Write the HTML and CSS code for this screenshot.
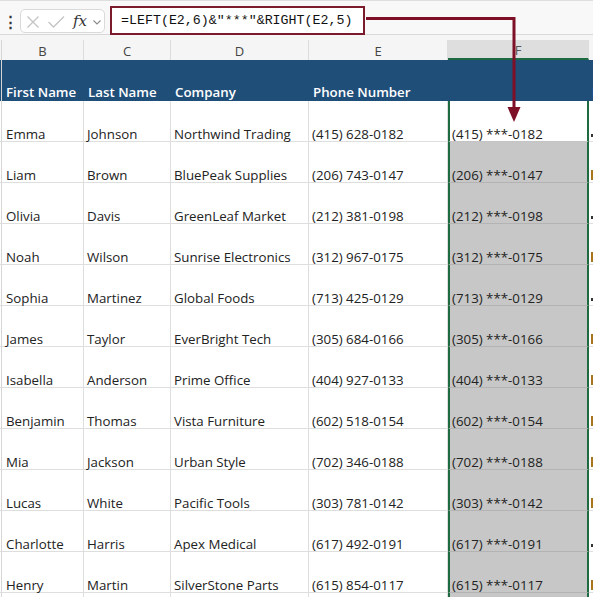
FILE: index.html
```html
<!DOCTYPE html>
<html>
<head>
<meta charset="utf-8">
<link rel="stylesheet" href="styles.css">
</head>
<body>
<div class="app">
  <div class="fbar">
    <span class="dots">&#8942;</span>
    <div class="ctrl">
      <svg width="85" height="24" viewBox="0 0 85 24">
        <path d="M7.5 7.5 L18.5 18.5 M18.5 7.5 L7.5 18.5" stroke="#c4c4c4" stroke-width="1.3" fill="none"/>
        <path d="M28.5 13 L33.5 18 L44 7.5" stroke="#c4c4c4" stroke-width="1.3" fill="none"/>
        <path d="M73.5 11.5 L77 15 L80.5 11.5" stroke="#8a8a8a" stroke-width="1.1" fill="none"/>
      </svg>
      <span class="fx">fx</span>
    </div>
    <div class="formula">=LEFT(E2,6)&amp;"***"&amp;RIGHT(E2,5)</div>
  </div>
  <div class="gap"></div>
  <div class="row colhdr">
    <div class="c"></div>
    <div class="c">B</div>
    <div class="c">C</div>
    <div class="c">D</div>
    <div class="c">E</div>
    <div class="c f">F</div>
    <div class="c"></div>
  </div>
  <div class="row hdr">
    <div class="c"></div>
    <div class="c">First Name</div>
    <div class="c">Last Name</div>
    <div class="c">Company</div>
    <div class="c">Phone Number</div>
    <div class="c"></div>
    <div class="c g">Email</div>
  </div>
  <div class="row data">
    <div class="c"></div><div class="c">Emma</div><div class="c">Johnson</div><div class="c">Northwind Trading</div><div class="c">(415) 628-0182</div><div class="c f active">(415) ***-0182</div><div class="c g"><i class="mk d"></i></div>
  </div>
  <div class="row data">
    <div class="c"></div><div class="c">Liam</div><div class="c">Brown</div><div class="c">BluePeak Supplies</div><div class="c">(206) 743-0147</div><div class="c f">(206) ***-0147</div><div class="c g"><i class="mk b"></i></div>
  </div>
  <div class="row data">
    <div class="c"></div><div class="c">Olivia</div><div class="c">Davis</div><div class="c">GreenLeaf Market</div><div class="c">(212) 381-0198</div><div class="c f">(212) ***-0198</div><div class="c g"><i class="mk d"></i></div>
  </div>
  <div class="row data">
    <div class="c"></div><div class="c">Noah</div><div class="c">Wilson</div><div class="c">Sunrise Electronics</div><div class="c">(312) 967-0175</div><div class="c f">(312) ***-0175</div><div class="c g"><i class="mk b"></i></div>
  </div>
  <div class="row data">
    <div class="c"></div><div class="c">Sophia</div><div class="c">Martinez</div><div class="c">Global Foods</div><div class="c">(713) 425-0129</div><div class="c f">(713) ***-0129</div><div class="c g"><i class="mk d"></i></div>
  </div>
  <div class="row data">
    <div class="c"></div><div class="c">James</div><div class="c">Taylor</div><div class="c">EverBright Tech</div><div class="c">(305) 684-0166</div><div class="c f">(305) ***-0166</div><div class="c g"><i class="mk b"></i></div>
  </div>
  <div class="row data">
    <div class="c"></div><div class="c">Isabella</div><div class="c">Anderson</div><div class="c">Prime Office</div><div class="c">(404) 927-0133</div><div class="c f">(404) ***-0133</div><div class="c g"><i class="mk b"></i></div>
  </div>
  <div class="row data">
    <div class="c"></div><div class="c">Benjamin</div><div class="c">Thomas</div><div class="c">Vista Furniture</div><div class="c">(602) 518-0154</div><div class="c f">(602) ***-0154</div><div class="c g"><i class="mk b"></i></div>
  </div>
  <div class="row data">
    <div class="c"></div><div class="c">Mia</div><div class="c">Jackson</div><div class="c">Urban Style</div><div class="c">(702) 346-0188</div><div class="c f">(702) ***-0188</div><div class="c g"><i class="mk b"></i></div>
  </div>
  <div class="row data">
    <div class="c"></div><div class="c">Lucas</div><div class="c">White</div><div class="c">Pacific Tools</div><div class="c">(303) 781-0142</div><div class="c f">(303) ***-0142</div><div class="c g"><i class="mk b"></i></div>
  </div>
  <div class="row data">
    <div class="c"></div><div class="c">Charlotte</div><div class="c">Harris</div><div class="c">Apex Medical</div><div class="c">(617) 492-0191</div><div class="c f">(617) ***-0191</div><div class="c g"><i class="mk d"></i></div>
  </div>
  <div class="row data">
    <div class="c"></div><div class="c">Henry</div><div class="c">Martin</div><div class="c">SilverStone Parts</div><div class="c">(615) 854-0117</div><div class="c f">(615) ***-0117</div><div class="c g"><i class="mk b"></i></div>
  </div>
  <div class="row data">
    <div class="c"></div><div class="c"></div><div class="c"></div><div class="c"></div><div class="c"></div><div class="c f"></div><div class="c g"></div>
  </div>
  <svg class="arrow" width="593" height="130" viewBox="0 0 593 130">
    <path d="M366 18.5 H514 V110" stroke="#7d0f26" stroke-width="3" fill="none"/>
    <path d="M507.5 107 L520.5 107 L514 122 Z" fill="#7d0f26"/>
  </svg>
</div>
</body>
</html>
```
FILE: styles.css
```css
html, body {
  margin: 0;
  padding: 0;
  background: #ffffff;
}
.app {
  position: relative;
  width: 593px;
  height: 597px;
  overflow: hidden;
  font-family: "Open Sans", "Liberation Sans", sans-serif;
  font-size: 13.3px;
  color: #222;
}
.fbar {
  height: 33px;
  background: #f8f8f8;
  border-top: 1px solid #dedede;
  border-bottom: 1px solid #d9d9d9;
  display: flex;
  align-items: flex-start;
  box-sizing: content-box;
}
.dots {
  width: 14px;
  margin-left: 3px;
  margin-top: 9px;
  font-size: 15px;
  line-height: 22px;
  text-align: center;
  color: #333;
  font-weight: bold;
}
.ctrl {
  position: relative;
  margin-left: 3px;
  margin-top: 8px;
  width: 85px;
  height: 24px;
  background: #ffffff;
  border: 1px solid #dadada;
  border-radius: 5px;
  box-sizing: border-box;
}
.ctrl svg {
  position: absolute;
  left: -1px;
  top: -1px;
}
.fx {
  position: absolute;
  left: 52px;
  top: 1px;
  font-family: "DejaVu Serif", "Liberation Serif", serif;
  font-style: italic;
  font-size: 15px;
  line-height: 20px;
  color: #333;
}
.formula {
  margin-left: 5px;
  margin-top: 5px;
  width: 255px;
  height: 29px;
  box-sizing: border-box;
  border: 2px solid #7b1a2c;
  background: #ffffff;
  padding-left: 9px;
  font-family: "Liberation Mono", "DejaVu Sans Mono", monospace;
  font-size: 13.3px;
  line-height: 25px;
  color: #111;
  white-space: nowrap;
}
.gap {
  height: 5px;
  background: #f5f5f5;
}
.row {
  display: grid;
  grid-template-columns: 2px 82px 87px 138px 139px 141px 40px;
}
.c {
  box-sizing: border-box;
  border-right: 1px solid #dedede;
  border-bottom: 1px solid #dedede;
  white-space: nowrap;
  display: flex;
  align-items: flex-end;
  padding: 0 0 0 3px;
  line-height: 14px;
}
.row .c:first-child {
  padding: 0;
  border-right: 1px solid #d6d6d6;
}
.colhdr {
  height: 20px;
  background: #f5f5f5;
}
.colhdr .c {
  justify-content: center;
  align-items: center;
  padding: 2px 0 0 0;
  color: #444;
  font-size: 13px;
  border-right: 1px solid #dcdcdc;
  border-bottom: none;
}
.colhdr .c.f {
  background: #dedede;
  border-bottom: 2px solid #1e6b41;
  color: #555;
}
.hdr {
  height: 41px;
  background: #1f4e79;
}
.hdr .c {
  border: none;
  color: #ffffff;
  font-weight: 600;
  padding-bottom: 2px;
  padding-left: 4px;
}
.hdr .c.g {
  padding-left: 3px;
}
.data {
  height: 41px;
}
.data .c:nth-child(2) {
  padding-left: 4px;
}
.data .c.f {
  background: #c7c7c7;
  border-left: 2px solid #1e6b41;
  border-right: 2px solid #1e6b41;
  border-bottom: 1px solid #b3b3b3;
  padding-left: 2px;
  color: #222;
}
.data .c.f.active {
  background: #ffffff;
  border-bottom: 1px solid #c4c4c4;
}
.c.g {
  padding-left: 2px;
  border-right: none;
  overflow: hidden;
}
.mk {
  display: inline-block;
  width: 2px;
  margin-bottom: 2px;
}
.mk.d {
  height: 3px;
  background: #333333;
  margin-bottom: 4px;
}
.mk.b {
  height: 10px;
  background: #a8741e;
}
.arrow {
  position: absolute;
  left: 0;
  top: 0;
  pointer-events: none;
}
```
